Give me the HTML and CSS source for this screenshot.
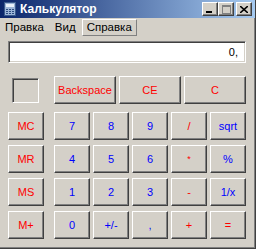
FILE: index.html
```html
<!DOCTYPE html>
<html lang="ru">

<head>
   <meta charset="UTF-8">
   <meta name="viewport" content="width=device-width, initial-scale=1.0">
   <link rel="stylesheet" href="styles.css">
</head>

<body>
   <div class="window">
      <div class="titlebar">
         <svg class="app-icon" width="12" height="14" viewBox="0 0 12 14">
            <rect x="0.5" y="0.5" width="11" height="13" fill="#9cb4d8" stroke="#3a5a8c" />
            <rect x="2" y="2" width="8" height="3" fill="#e8f0fa" />
            <rect x="2" y="7" width="2" height="1" fill="#2a4a80" />
            <rect x="5" y="7" width="2" height="1" fill="#2a4a80" />
            <rect x="8" y="7" width="2" height="1" fill="#2a4a80" />
            <rect x="2" y="9" width="2" height="1" fill="#2a4a80" />
            <rect x="5" y="9" width="2" height="1" fill="#2a4a80" />
            <rect x="8" y="9" width="2" height="1" fill="#2a4a80" />
            <rect x="2" y="11" width="2" height="1" fill="#2a4a80" />
            <rect x="5" y="11" width="2" height="1" fill="#2a4a80" />
            <rect x="8" y="11" width="2" height="1" fill="#2a4a80" />
         </svg>
         <span class="title">Калькулятор</span>
         <div class="caption-btns">
            <div class="cap-btn">
               <svg width="8" height="7" viewBox="0 0 8 7"><rect x="0" y="5" width="6" height="2" fill="#000" /></svg>
            </div>
            <div class="cap-btn">
               <svg width="9" height="9" viewBox="0 0 9 9"><rect x="0.5" y="0.5" width="8" height="8" fill="none" stroke="#808080" /><rect x="1" y="1" width="7" height="1" fill="#808080" /></svg>
            </div>
            <div class="cap-btn close-btn">
               <svg width="8" height="7" viewBox="0 0 8 7"><path d="M0 0 L8 7 M8 0 L0 7" stroke="#000" stroke-width="1.6" /></svg>
            </div>
         </div>
      </div>

      <div class="menubar">
         <span class="menu-item">Правка</span>
         <span class="menu-item">Вид</span>
         <span class="menu-item active">Справка</span>
      </div>

      <div class="content">
         <div class="display">0,</div>

         <div class="top-row">
            <div class="mem-cell">
               <div class="mem-indicator"></div>
            </div>
            <div class="top-keys">
               <button class="key red">Backspace</button>
               <button class="key red">CE</button>
               <button class="key red">C</button>
            </div>
         </div>

         <div class="keypad">
            <div class="mem-col">
               <button class="key red">MC</button>
               <button class="key red">MR</button>
               <button class="key red">MS</button>
               <button class="key red">M+</button>
            </div>
            <div class="digits">
               <button class="key blue">7</button>
               <button class="key blue">8</button>
               <button class="key blue">9</button>
               <button class="key red">/</button>
               <button class="key blue">sqrt</button>

               <button class="key blue">4</button>
               <button class="key blue">5</button>
               <button class="key blue">6</button>
               <button class="key red small">*</button>
               <button class="key blue">%</button>

               <button class="key blue">1</button>
               <button class="key blue">2</button>
               <button class="key blue">3</button>
               <button class="key red">-</button>
               <button class="key blue">1/x</button>

               <button class="key blue">0</button>
               <button class="key blue">+/-</button>
               <button class="key blue">,</button>
               <button class="key red">+</button>
               <button class="key red">=</button>
            </div>
         </div>
      </div>
   </div>
</body>

</html>
```

FILE: styles.css
```css
body {
   margin: 0;
   background-color: #d4d0c8;
   font-family: "Liberation Sans", Arial, sans-serif;
}

.window {
   width: 256px;
   height: 249px;
   box-sizing: border-box;
   background-color: #d4d0c8;
   border-right: 1px solid #404040;
   border-bottom: 1px solid #404040;
   box-shadow: inset -1px -1px #808080;
}

.titlebar {
   display: flex;
   align-items: center;
   height: 18px;
   padding-left: 4px;
   background: linear-gradient(to right, #0a246a, #a6caf0);
}

.app-icon {
   display: block;
}

.title {
   margin-left: 4px;
   color: #fff;
   font-weight: bold;
   font-size: 12px;
}

.caption-btns {
   display: flex;
   margin-left: auto;
   margin-right: 3px;
}

.cap-btn {
   display: flex;
   align-items: center;
   justify-content: center;
   width: 16px;
   height: 14px;
   box-sizing: border-box;
   background-color: #d4d0c8;
   border-top: 1px solid #fff;
   border-left: 1px solid #fff;
   border-right: 1px solid #404040;
   border-bottom: 1px solid #404040;
   box-shadow: inset -1px -1px #808080;
}

.close-btn {
   margin-left: 2px;
}

.menubar {
   display: flex;
   align-items: center;
   height: 19px;
   font-size: 11.5px;
}

.menu-item {
   padding: 1px 4px 2px 4px;
   margin-right: 1px;
   border: 1px solid transparent;
}

.active {
   border-top-color: #fff;
   border-left-color: #fff;
   border-right-color: #808080;
   border-bottom-color: #808080;
}

.content {
   padding: 4px 9px 0 8px;
}

.display {
   height: 22px;
   box-sizing: border-box;
   padding: 4px 7px 0 0;
   text-align: right;
   font-size: 11px;
   background-color: #fff;
   border-top: 1px solid #808080;
   border-left: 1px solid #808080;
   border-right: 1px solid #fff;
   border-bottom: 1px solid #fff;
   box-shadow: inset 1px 1px #404040, inset -1px -1px #d4d0c8;
}

.top-row {
   display: flex;
   gap: 10px;
   margin-top: 13px;
}

.mem-cell {
   width: 36px;
   padding: 2px 0 0 4px;
   box-sizing: border-box;
}

.mem-indicator {
   width: 27px;
   height: 25px;
   box-sizing: border-box;
   border-top: 1px solid #808080;
   border-left: 1px solid #808080;
   border-right: 1px solid #fff;
   border-bottom: 1px solid #fff;
   box-shadow: inset 1px 1px #404040;
}

.top-keys {
   display: grid;
   grid-template-columns: repeat(3, 62px);
   gap: 3px;
}

.keypad {
   display: flex;
   gap: 10px;
   margin-top: 8px;
}

.mem-col {
   display: flex;
   flex-direction: column;
   gap: 5px;
   width: 36px;
}

.digits {
   display: grid;
   grid-template-columns: repeat(5, 36px);
   row-gap: 5px;
   column-gap: 3px;
}

.key {
   height: 28px;
   padding: 0;
   margin: 0;
   box-sizing: border-box;
   background-color: #d4d0c8;
   font-family: "Liberation Sans", Arial, sans-serif;
   font-size: 11px;
   border-top: 1px solid #fff;
   border-left: 1px solid #fff;
   border-right: 1px solid #404040;
   border-bottom: 1px solid #404040;
   box-shadow: inset -1px -1px #808080;
}

.red {
   color: #f00;
}

.blue {
   color: #00f;
}

.small {
   font-size: 9px;
}
```
